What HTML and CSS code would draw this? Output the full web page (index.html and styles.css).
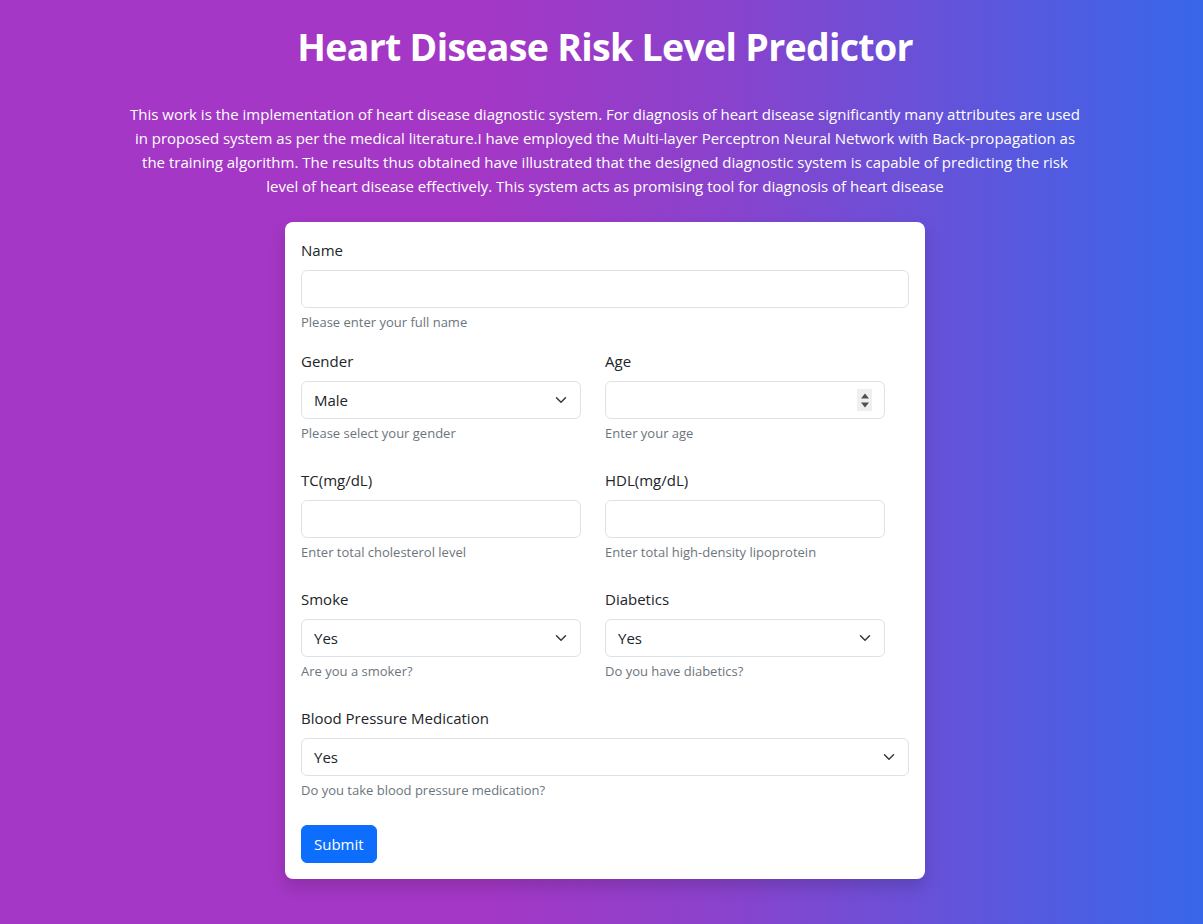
FILE: index.html
```html
<!DOCTYPE html>
<html lang="en">
<head>
<meta charset="utf-8">
<title>Heart Disease Risk Level Predictor</title>
<link rel="stylesheet" href="styles.css">
</head>
<body>
<main class="page">
  <h1 class="title">Heart Disease Risk Level Predictor</h1>
  <p class="intro">This work is the implementation of heart disease diagnostic system. For diagnosis of heart disease significantly many attributes are used in proposed system as per the medical literature.I have employed the Multi-layer Perceptron Neural Network with Back-propagation as the training algorithm. The results thus obtained have illustrated that the designed diagnostic system is capable of predicting the risk level of heart disease effectively. This system acts as promising tool for diagnosis of heart disease</p>
  <form class="card">
    <div class="field">
      <label class="label" for="name">Name</label>
      <input class="control" id="name" type="text">
      <div class="help">Please enter your full name</div>
    </div>
    <div class="row">
      <div class="field">
        <label class="label" for="gender">Gender</label>
        <div class="select-wrap">
          <select class="control select" id="gender"><option>Male</option><option>Female</option></select>
          <svg class="chev" viewBox="0 0 16 16" width="16" height="12"><path d="M2 5l6 6 6-6" fill="none" stroke="#343a40" stroke-width="2" stroke-linecap="round" stroke-linejoin="round"/></svg>
        </div>
        <div class="help">Please select your gender</div>
      </div>
      <div class="field">
        <label class="label" for="age">Age</label>
        <div class="number-wrap">
          <input class="control number" id="age" type="number">
          <span class="spinner" aria-hidden="true">
            <svg viewBox="0 0 8 6" width="8" height="6"><path d="M0 5.5L4 0.5 8 5.5z" fill="#505050"/></svg>
            <svg viewBox="0 0 8 6" width="8" height="6"><path d="M0 0.5L4 5.5 8 0.5z" fill="#505050"/></svg>
          </span>
        </div>
        <div class="help">Enter your age</div>
      </div>
    </div>
    <div class="row">
      <div class="field">
        <label class="label" for="tc">TC(mg/dL)</label>
        <input class="control" id="tc" type="text">
        <div class="help">Enter total cholesterol level</div>
      </div>
      <div class="field">
        <label class="label" for="hdl">HDL(mg/dL)</label>
        <input class="control" id="hdl" type="text">
        <div class="help">Enter total high-density lipoprotein</div>
      </div>
    </div>
    <div class="row">
      <div class="field">
        <label class="label" for="smoke">Smoke</label>
        <div class="select-wrap">
          <select class="control select" id="smoke"><option>Yes</option><option>No</option></select>
          <svg class="chev" viewBox="0 0 16 16" width="16" height="12"><path d="M2 5l6 6 6-6" fill="none" stroke="#343a40" stroke-width="2" stroke-linecap="round" stroke-linejoin="round"/></svg>
        </div>
        <div class="help">Are you a smoker?</div>
      </div>
      <div class="field">
        <label class="label" for="diab">Diabetics</label>
        <div class="select-wrap">
          <select class="control select" id="diab"><option>Yes</option><option>No</option></select>
          <svg class="chev" viewBox="0 0 16 16" width="16" height="12"><path d="M2 5l6 6 6-6" fill="none" stroke="#343a40" stroke-width="2" stroke-linecap="round" stroke-linejoin="round"/></svg>
        </div>
        <div class="help">Do you have diabetics?</div>
      </div>
    </div>
    <div class="field field-last">
      <label class="label" for="bpm">Blood Pressure Medication</label>
      <div class="select-wrap">
        <select class="control select" id="bpm"><option>Yes</option><option>No</option></select>
        <svg class="chev" viewBox="0 0 16 16" width="16" height="12"><path d="M2 5l6 6 6-6" fill="none" stroke="#343a40" stroke-width="2" stroke-linecap="round" stroke-linejoin="round"/></svg>
      </div>
      <div class="help">Do you take blood pressure medication?</div>
    </div>
    <div class="actions">
      <button class="btn" type="button">Submit</button>
    </div>
  </form>
</main>
</body>
</html>
```
FILE: styles.css
```css
* { box-sizing: border-box; }
html, body { margin: 0; height: 100%; }
body {
  font-family: "Open Sans", "Noto Sans", sans-serif;
  font-size: 15px;
  line-height: 1.5;
  color: #212529;
  background: linear-gradient(to right, #a437c5 0%, #a437c5 40%, #8a42cc 60%, #3866e9 100%);
  min-height: 924px;
}
.page {
  display: flex;
  flex-direction: column;
  align-items: center;
  padding: 23px 0 0 7px;
}
.title {
  margin: 0;
  font-size: 37.5px;
  font-weight: 700;
  letter-spacing: -0.7px;
  line-height: 48px;
  color: #fff;
}
.intro {
  margin: 31px 0 0;
  max-width: 955px;
  text-align: center;
  color: #fff;
  font-size: 15px;
  line-height: 24px;
}
.card {
  margin-top: 24px;
  width: 640px;
  background: #fff;
  border-radius: 8px;
  padding: 16px;
  box-shadow: 0 8px 16px rgba(0,0,0,.15);
}
.field { display: flex; flex-direction: column; }
.card > .field { margin-bottom: 16px; }
.card > .field-last { margin-bottom: 24px; }
.row {
  display: grid;
  grid-template-columns: 280px 280px;
  column-gap: 24px;
  margin-bottom: 24px;
}
.label { margin-bottom: 8px; line-height: 24px; }
.control {
  display: block;
  width: 100%;
  height: 38px;
  padding: 6px 12px;
  font: inherit;
  color: #212529;
  background: #fff;
  border: 1px solid #dee2e6;
  border-radius: 6px;
  outline: none;
}
.select-wrap, .number-wrap { position: relative; }
.select {
  appearance: none;
  -webkit-appearance: none;
  padding-right: 36px;
}
.number { -moz-appearance: textfield; }
.number::-webkit-inner-spin-button,
.number::-webkit-outer-spin-button { -webkit-appearance: none; margin: 0; }
.spinner {
  position: absolute;
  right: 13px;
  top: 8px;
  width: 15px;
  height: 22px;
  background: #efefef;
  display: flex;
  flex-direction: column;
  align-items: center;
  justify-content: center;
  gap: 3px;
  pointer-events: none;
}
.spinner svg { display: block; }
.chev {
  position: absolute;
  right: 12px;
  top: 13px;
  pointer-events: none;
}
.help {
  margin-top: 4px;
  font-size: 13px;
  line-height: 21px;
  color: #6c757d;
}
.actions { display: flex; }
.btn {
  font: inherit;
  color: #fff;
  background: #0d6efd;
  border: 1px solid #0d6efd;
  border-radius: 6px;
  padding: 6px 12px;
  line-height: 24px;
}
```
